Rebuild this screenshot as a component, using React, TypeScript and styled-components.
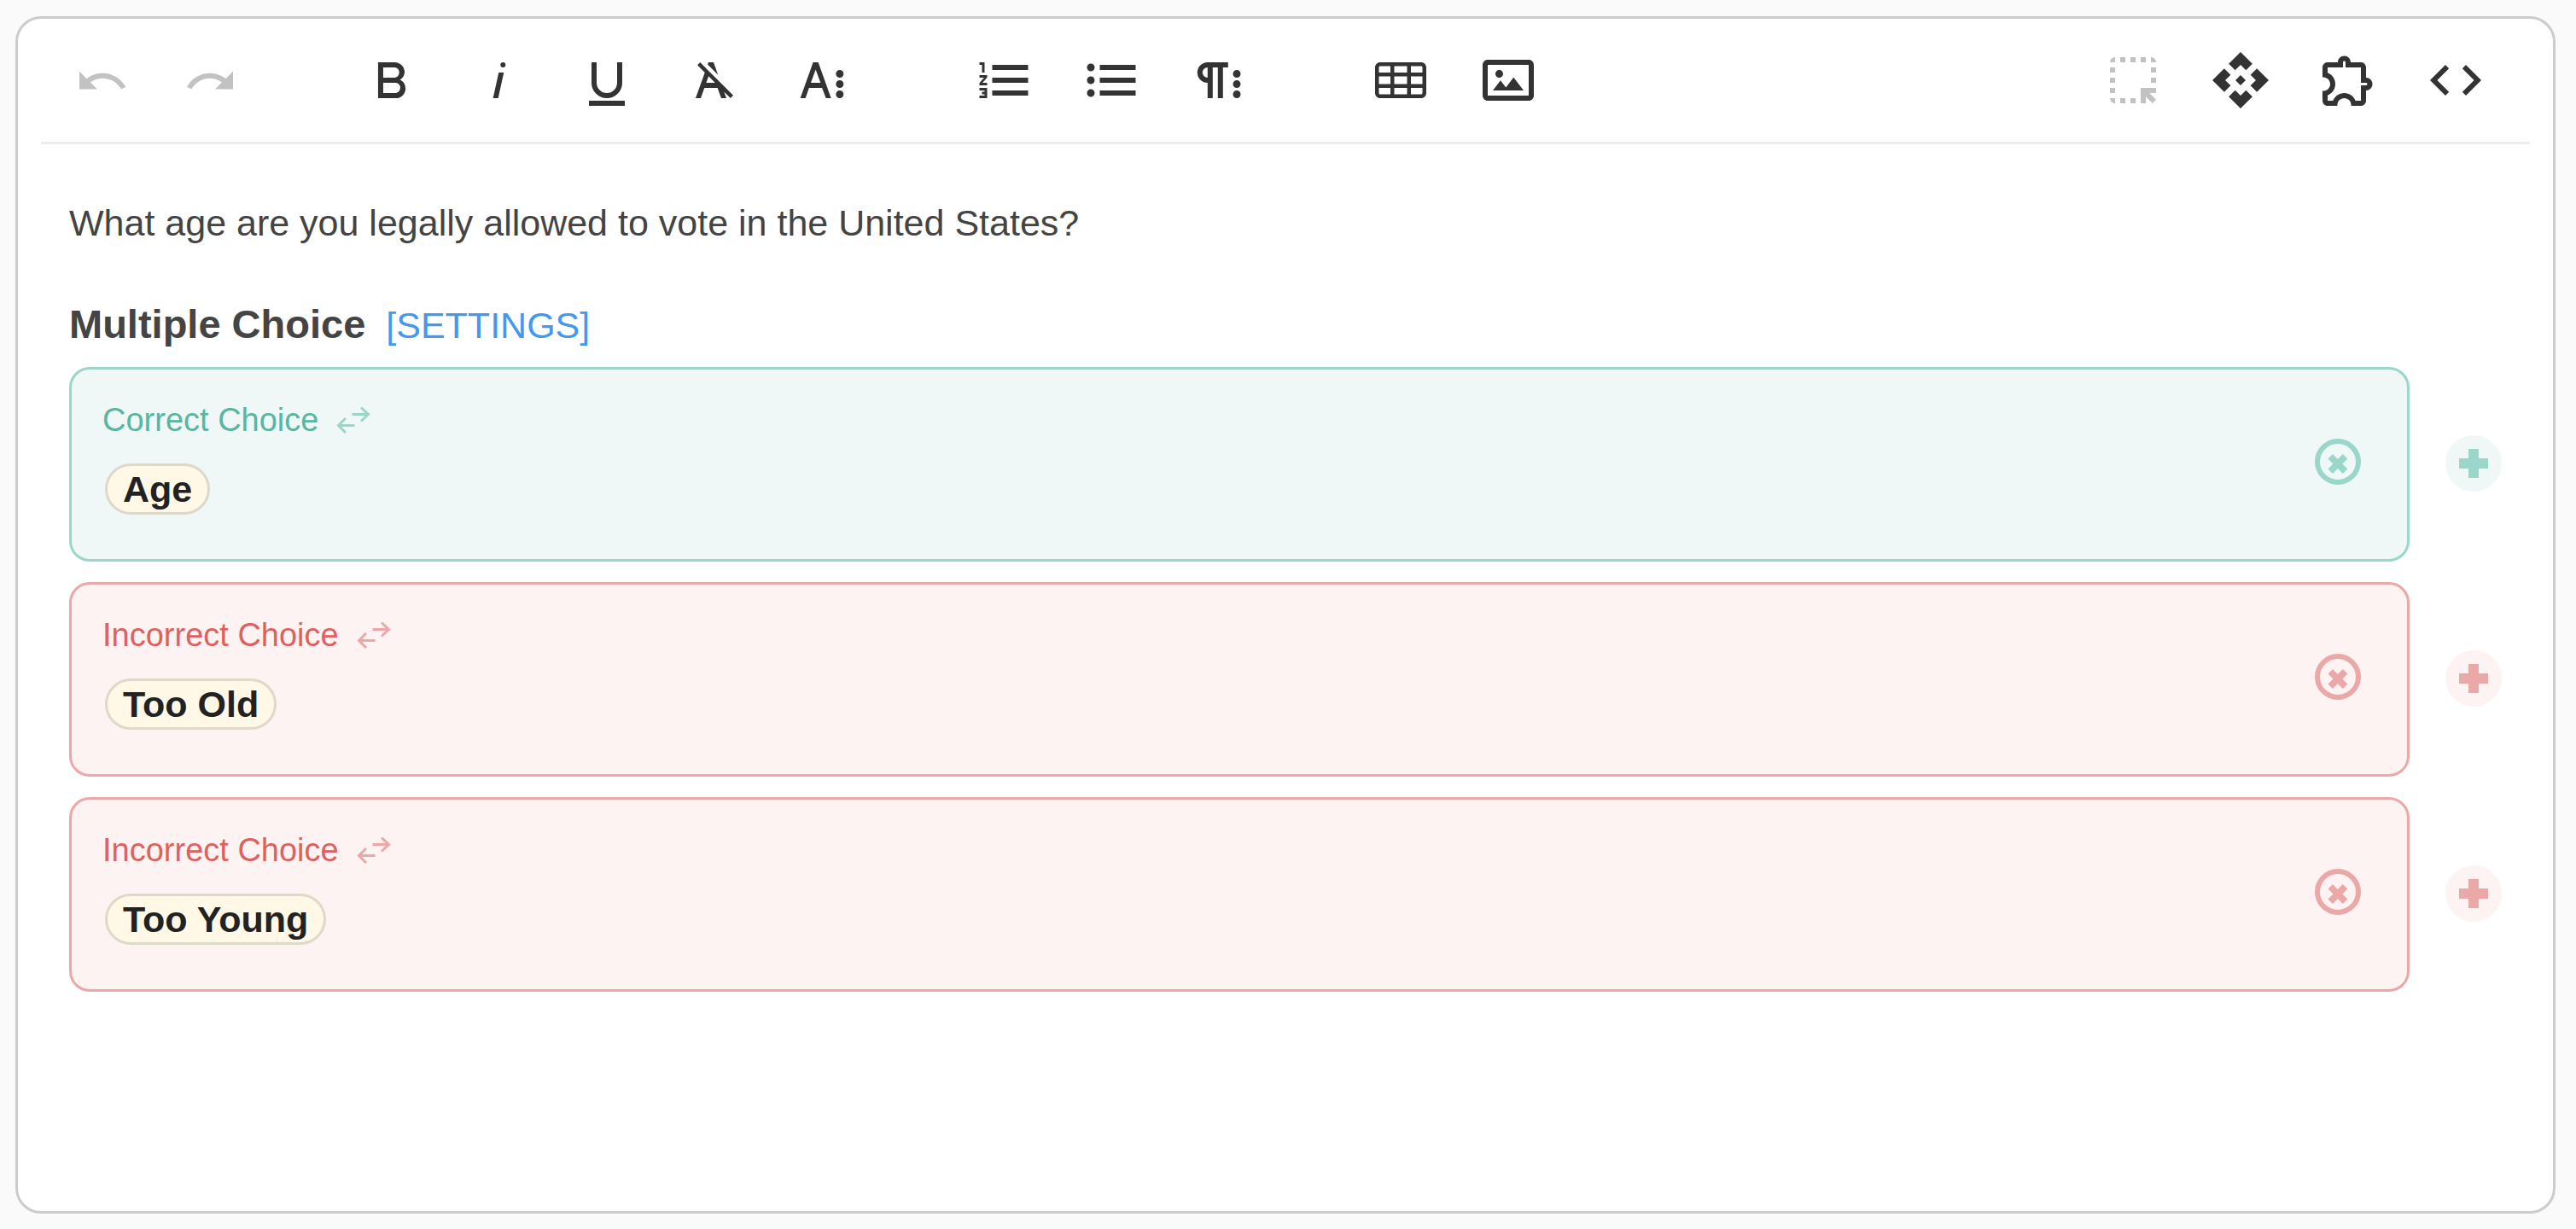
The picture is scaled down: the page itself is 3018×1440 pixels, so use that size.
import React from "react";
import styled, { createGlobalStyle } from "styled-components";

const GlobalStyle = createGlobalStyle`
  *, *::before, *::after { box-sizing: border-box; }
  body {
    margin: 0;
    background: #fafafa;
    color: #444;
    font-family: "Liberation Sans", Helvetica, Arial, sans-serif;
  }
  button {
    margin: 0;
    padding: 0;
    border: 0;
    background: none;
    color: inherit;
    font: inherit;
    cursor: pointer;
  }
`;

type Tone = "correct" | "incorrect";

const tones = {
  correct: { line: "#9ad6c9", fill: "#f0f8f7", label: "#5bb5a0", pillLine: "#ddd9ca" },
  incorrect: { line: "#eaa8a6", fill: "#fdf3f2", label: "#dd615f", pillLine: "#dddac8" },
};

const Page = styled.div`
  display: flex;
  min-height: 100vh;
  padding: 19px 24px 18px 18px;
`;

const Editor = styled.section`
  flex: 1;
  min-width: 0;
  background: #fff;
  border: 3px solid #ccc;
  border-radius: 30px;
`;

const Toolbar = styled.div`
  display: flex;
  justify-content: space-between;
  margin: 0 27px;
  padding: 15px 30px 15px 15px;
  border-bottom: 3px solid #eee;
`;

const ToolSet = styled.div`
  display: flex;
  gap: 99px;
`;

const ToolGroup = styled.div`
  display: flex;
  gap: 12px;
`;

const ToolButton = styled.button`
  display: flex;
  align-items: center;
  justify-content: center;
  width: 114px;
  height: 114px;
  color: #333;

  &:disabled {
    color: #c2c2c2;
    cursor: default;
  }
`;

const ToolIcon = styled.svg`
  width: 72px;
  height: 72px;
  fill: currentColor;
`;

const Content = styled.div`
  padding: 60px;
`;

const Question = styled.p`
  margin: 0 0 54px;
  font-size: 43px;
  line-height: 65px;
`;

const SectionHead = styled.header`
  display: flex;
  align-items: baseline;
  gap: 24px;
  margin-bottom: 17px;
`;

const SectionTitle = styled.h3`
  margin: 0;
  font-size: 47px;
  line-height: 63px;
`;

const SettingsLink = styled.a`
  color: #4498f0;
  font-size: 43px;
  line-height: 63px;
  text-decoration: none;
`;

const ChoiceList = styled.ul`
  display: flex;
  flex-direction: column;
  gap: 24px;
  margin: 0;
  padding: 0;
  list-style: none;
`;

const ChoiceRow = styled.li`
  display: flex;
  align-items: center;
  gap: 42px;
`;

const ChoiceCard = styled.div<{ $tone: Tone }>`
  display: flex;
  flex: 1;
  align-items: center;
  justify-content: space-between;
  padding: 0 54px 0 36px;
  background: ${(p) => tones[p.$tone].fill};
  border: 3px solid ${(p) => tones[p.$tone].line};
  border-radius: 24px;
`;

const ChoiceBody = styled.div`
  display: flex;
  flex-direction: column;
  align-items: flex-start;
  gap: 28px;
  padding: 36px 0 52px;
`;

const ChoiceLabel = styled.div<{ $tone: Tone }>`
  display: flex;
  align-items: center;
  gap: 21px;
  color: ${(p) => tones[p.$tone].label};
  font-size: 38px;
  line-height: 46px;
`;

const SwapButton = styled.button<{ $tone: Tone }>`
  display: flex;
  color: ${(p) => tones[p.$tone].line};
`;

const Pill = styled.strong<{ $tone: Tone }>`
  margin-left: 3px;
  padding: 0 18px;
  background: #fff8e7;
  border: 3px solid ${(p) => tones[p.$tone].pillLine};
  border-radius: 30px;
  color: #222;
  font-size: 43px;
  line-height: 54px;
`;

const DeleteButton = styled.button<{ $tone: Tone }>`
  display: flex;
  margin-bottom: 6px;
  color: ${(p) => tones[p.$tone].line};
`;

const AddButton = styled.button<{ $tone: Tone }>`
  display: flex;
  align-items: center;
  justify-content: center;
  width: 66px;
  height: 66px;
  margin-bottom: 2px;
  border-radius: 50%;
  background: ${(p) => tones[p.$tone].fill};
  color: ${(p) => tones[p.$tone].line};
`;

type Tool = { name: string; path: string; disabled?: boolean };

const leftTools: Tool[][] = [
  [
    {
      name: "Undo",
      disabled: true,
      path: "M10.4,9.4c-1.7,0.3-3.2,0.9-4.6,2L3,8.5v7h7l-2.7-2.7c3.7-2.6,8.8-1.8,11.5,1.9c0.2,0.3,0.4,0.5,0.5,0.8l1.8-0.9C18.9,10.8,14.7,8.7,10.4,9.4z",
    },
    {
      name: "Redo",
      disabled: true,
      path: "M13.6,9.4c1.7,0.3,3.2,0.9,4.6,2L21,8.5v7h-7l2.7-2.7C13,10.1,7.9,11,5.3,14.7c-0.2,0.3-0.4,0.5-0.5,0.8L3,14.6C5.1,10.8,9.3,8.7,13.6,9.4z",
    },
  ],
  [
    {
      name: "Bold",
      path: "M15.25,11.8h0A3.68,3.68,0,0,0,17,9a3.93,3.93,0,0,0-3.86-4H6.65V19h7a3.74,3.74,0,0,0,3.7-3.78V15.1A3.64,3.64,0,0,0,15.25,11.8ZM8.65,7h4.2a2.09,2.09,0,0,1,2,1.3,2.09,2.09,0,0,1-1.37,2.61,2.23,2.23,0,0,1-.63.09H8.65Zm4.6,10H8.65V13h4.6a2.09,2.09,0,0,1,2,1.3,2.09,2.09,0,0,1-1.37,2.61A2.23,2.23,0,0,1,13.25,17Z",
    },
    {
      name: "Italic",
      path: "M11.76,9h2l-2.2,10h-2Zm1.68-4a1,1,0,1,0,1,1,1,1,0,0,0-1-1Z",
    },
    {
      name: "Underline",
      path: "M19,20v2H5V20Zm-3-7a4,4,0,0,1-8,0V5H6v8a6,6,0,0,0,12,0V5H16Z",
    },
    {
      name: "Clear Formatting",
      path: "M11.48,10.09l-1.2-1.21L8.8,7.41,6.43,5,5.37,6.1,8.25,9,4.66,19h2l1.43-4h5.14l1.43,4h2l-.89-2.51L18.27,19l1.07-1.06L14.59,13.2ZM8.8,13l.92-2.56L12.27,13Zm.56-7.15L9.66,5h2l1.75,4.9Z",
    },
    {
      name: "More Text",
      path: "M13.55,19h2l-5-14h-2l-5,14h2l1.4-4h5.1Zm-5.9-6,1.9-5.2,1.9,5.2Zm12.8,4.5a1.5,1.5,0,1,1-1.5-1.5A1.5,1.5,0,0,1,20.45,17.5Zm0-4a1.5,1.5,0,1,1-1.5-1.5A1.5,1.5,0,0,1,20.45,13.5Zm0-4A1.5,1.5,0,1,1,18.95,8,1.5,1.5,0,0,1,20.45,9.5Z",
    },
  ],
  [
    {
      name: "Ordered List",
      path: "M2.5,16h2v.5h-1v1h1V18h-2v1h3V15h-3Zm1-7h1V5h-2V6h1Zm-1,2H4.3L2.5,13.1V14h3V13H3.7l1.8-2.1V10h-3Zm5-5V8h14V6Zm0,12h14V16H7.5Zm0-5h14V11H7.5Z",
    },
    {
      name: "Unordered List",
      path: "M4,10.5a1.5,1.5,0,1,0,0,3,1.5,1.5,0,0,0,0-3ZM4,5.5a1.5,1.5,0,1,0,0,3,1.5,1.5,0,0,0,0-3ZM4,15.5a1.5,1.5,0,1,0,0,3,1.5,1.5,0,0,0,0-3ZM7.5,6v2h14V6Zm0,12h14V16H7.5Zm0-5h14V11H7.5Z",
    },
    {
      name: "More Paragraph",
      path: "M7.6,5a4,4,0,1,0,0,8v6h2V7h2V19h2V7h2V5ZM7.6,11a2,2,0,0,1,0-4ZM19,8a1.5,1.5,0,1,0,0,3,1.5,1.5,0,0,0,0-3Zm0,4a1.5,1.5,0,1,0,0,3,1.5,1.5,0,0,0,0-3Zm0,4a1.5,1.5,0,1,0,0,3,1.5,1.5,0,0,0,0-3Z",
    },
  ],
  [
    {
      name: "Insert Table",
      path: "M20,5H4C2.9,5,2,5.9,2,7v10c0,1.1,0.9,2,2,2h16c1.1,0,2-0.9,2-2V7C22,5.9,21.1,5,20,5z M9.5,13.5v-3h5v3H9.5z M14.5,15v2.5h-5V15H14.5z M9.5,9V6.5h5V9H9.5z M3.5,7c0-0.3,0.2-0.5,0.5-0.5h4V9H3.5V7z M8,10.5v3H3.5v-3H8z M3.5,17v-2H8v2.5H4C3.7,17.5,3.5,17.3,3.5,17z M20.5,17c0,0.3-0.2,0.5-0.5,0.5h-4V15h4.5V17z M20.5,13.5H16v-3h4.5V13.5z M16,9V6.5h4c0.3,0,0.5,0.2,0.5,0.5v2H16z",
    },
    {
      name: "Insert Image",
      path: "M14.2,11l3.8,5H6l3-3.9l2.1,2.7L14,11H14.2z M8.5,11c0.8,0,1.5-0.7,1.5-1.5S9.3,8,8.5,8S7,8.7,7,9.5C7,10.3,7.7,11,8.5,11z M22,6v12c0,1.1-0.9,2-2,2H4c-1.1,0-2-0.9-2-2V6c0-1.1,0.9-2,2-2h16C21.1,4,22,4.9,22,6z M20,6H4v12h16V6z",
    },
  ],
];

const rightTools: Tool[] = [
  {
    name: "Select All",
    disabled: true,
    path: "M3,5h2V3C3.9,3,3,3.9,3,5z M7,3h2v2H7z M11,3h2v2h-2z M15,3h2v2h-2z M19,3v2h2C21,3.9,20.1,3,19,3z M3,7h2v2H3z M3,11h2v2H3z M3,15h2v2H3z M19,7h2v2h-2z M19,11h2v2h-2z M3,19h2v2C3.9,21,3,20.1,3,19z M7,19h2v2H7z M11,19h2v2h-2z M15,15h6v2h-2.6l2.6,2.6L19.6,21L17,18.4V21h-2z",
  },
  {
    name: "Variables",
    path: "M14 12l-2 2-2-2 2-2 2 2zm-2-6l2.12 2.12 2.5-2.5L12 1 7.38 5.62l2.5 2.5L12 6zm-6 6l2.12-2.12-2.5-2.5L1 12l4.62 4.62 2.5-2.5L6 12zm12 0l-2.12 2.12 2.5 2.5L23 12l-4.62-4.62-2.5 2.5L18 12zm-6 6l-2.12-2.12-2.5 2.5L12 23l4.62-4.62-2.5-2.5L12 18z",
  },
  {
    name: "Extensions",
    path: "M10.5 4.5c.28 0 .5.22.5.5v2h6v6h2c.28 0 .5.22.5.5s-.22.5-.5.5h-2v6h-2.12c-.68-1.75-2.39-3-4.38-3s-3.7 1.25-4.38 3H4v-2.12c1.75-.68 3-2.39 3-4.38 0-1.99-1.24-3.7-2.99-4.38L4 7h6V5c0-.28.22-.5.5-.5m0-2C9.12 2.5 8 3.62 8 5H4c-1.1 0-1.99.9-1.99 2v3.8h.29c1.49 0 2.7 1.21 2.7 2.7s-1.21 2.7-2.7 2.7H2V20c0 1.1.9 2 2 2h3.8v-.3c0-1.49 1.21-2.7 2.7-2.7s2.7 1.21 2.7 2.7v.3H17c1.1 0 2-.9 2-2v-4c1.38 0 2.5-1.12 2.5-2.5S20.38 11 19 11V7c0-1.1-.9-2-2-2h-4c0-1.38-1.12-2.5-2.5-2.5z",
  },
  {
    name: "Code View",
    path: "M9.4 16.6L4.8 12l4.6-4.6L8 6l-6 6 6 6 1.4-1.4zm5.2 0l4.6-4.6-4.6-4.6L16 6l6 6-6 6-1.4-1.4z",
  },
];

const choices: { tone: Tone; label: string; answer: string }[] = [
  { tone: "correct", label: "Correct Choice", answer: "Age" },
  { tone: "incorrect", label: "Incorrect Choice", answer: "Too Old" },
  { tone: "incorrect", label: "Incorrect Choice", answer: "Too Young" },
];

const Tools = ({ items }: { items: Tool[] }) => (
  <ToolGroup>
    {items.map((tool) => (
      <ToolButton key={tool.name} type="button" aria-label={tool.name} disabled={tool.disabled}>
        <ToolIcon viewBox="0 0 24 24" aria-hidden="true">
          <path fillRule="evenodd" d={tool.path} />
        </ToolIcon>
      </ToolButton>
    ))}
  </ToolGroup>
);

const SwapIcon = () => (
  <svg width="40" height="32" viewBox="0 0 40 32" fill="none" stroke="currentColor" strokeWidth="3" aria-hidden="true">
    <path d="M18.5 9.5H37M29 1.5l8.5 8-8.5 8" />
    <path d="M21.5 22.5H3M11 14l-8.5 8.5L11 31" />
  </svg>
);

const DeleteIcon = () => (
  <svg width="54" height="54" viewBox="0 0 54 54" fill="none" stroke="currentColor" aria-hidden="true">
    <circle cx="27" cy="27" r="24" strokeWidth="6" />
    <path d="M18.2 20.8l17.4 17.4M35.6 20.8L18.2 38.2" strokeWidth="7.8" />
  </svg>
);

const PlusIcon = () => (
  <svg width="34" height="34" viewBox="0 0 34 34" fill="currentColor" aria-hidden="true">
    <path d="M11 0h12v11h11v12H23v11H11V23H0V11h11z" />
  </svg>
);

export default function App() {
  return (
    <>
      <GlobalStyle />
      <Page>
        <Editor>
          <Toolbar role="toolbar" aria-label="Formatting">
            <ToolSet>
              {leftTools.map((group) => (
                <Tools key={group[0].name} items={group} />
              ))}
            </ToolSet>
            <Tools items={rightTools} />
          </Toolbar>
          <Content>
            <Question>What age are you legally allowed to vote in the United States?</Question>
            <SectionHead>
              <SectionTitle>Multiple Choice</SectionTitle>
              <SettingsLink href="#settings">[SETTINGS]</SettingsLink>
            </SectionHead>
            <ChoiceList>
              {choices.map(({ tone, label, answer }) => (
                <ChoiceRow key={answer}>
                  <ChoiceCard $tone={tone}>
                    <ChoiceBody>
                      <ChoiceLabel $tone={tone}>
                        {label}
                        <SwapButton $tone={tone} type="button" aria-label="Switch choice type">
                          <SwapIcon />
                        </SwapButton>
                      </ChoiceLabel>
                      <Pill $tone={tone}>{answer}</Pill>
                    </ChoiceBody>
                    <DeleteButton $tone={tone} type="button" aria-label={`Delete ${answer}`}>
                      <DeleteIcon />
                    </DeleteButton>
                  </ChoiceCard>
                  <AddButton $tone={tone} type="button" aria-label={`Add choice after ${answer}`}>
                    <PlusIcon />
                  </AddButton>
                </ChoiceRow>
              ))}
            </ChoiceList>
          </Content>
        </Editor>
      </Page>
    </>
  );
}
